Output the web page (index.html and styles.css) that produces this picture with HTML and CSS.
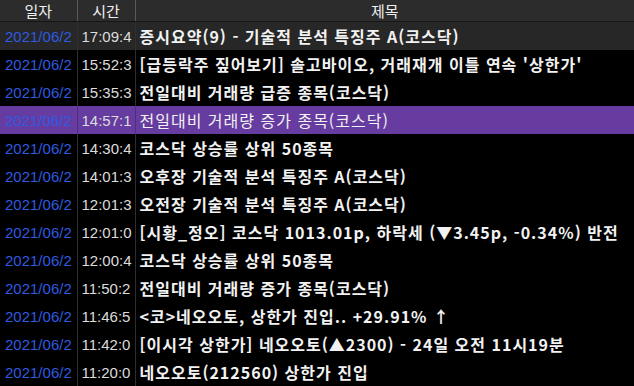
FILE: index.html
```html
<!DOCTYPE html>
<html lang="ko">
<head>
<meta charset="utf-8">
<title>뉴스</title>
<link rel="stylesheet" href="styles.css">
</head>
<body>
<table class="news">
  <colgroup>
    <col class="c-date">
    <col class="c-time">
    <col class="c-title">
  </colgroup>
  <thead>
    <tr><th>일자</th><th>시간</th><th>제목</th></tr>
  </thead>
  <tbody>
    <tr class="first"><td class="date">2021/06/2</td><td class="time">17:09:4</td><td class="title">증시요약(9) - 기술적 분석 특징주 A(코스닥)</td></tr>
    <tr><td class="date">2021/06/2</td><td class="time">15:52:3</td><td class="title">[급등락주 짚어보기] 솔고바이오, 거래재개 이틀 연속 '상한가'</td></tr>
    <tr><td class="date">2021/06/2</td><td class="time">15:35:3</td><td class="title">전일대비 거래량 급증 종목(코스닥)</td></tr>
    <tr class="selected"><td class="date">2021/06/2</td><td class="time">14:57:1</td><td class="title">전일대비 거래량 증가 종목(코스닥)</td></tr>
    <tr><td class="date">2021/06/2</td><td class="time">14:30:4</td><td class="title">코스닥 상승률 상위 50종목</td></tr>
    <tr><td class="date">2021/06/2</td><td class="time">14:01:3</td><td class="title">오후장 기술적 분석 특징주 A(코스닥)</td></tr>
    <tr><td class="date">2021/06/2</td><td class="time">12:01:3</td><td class="title">오전장 기술적 분석 특징주 A(코스닥)</td></tr>
    <tr><td class="date">2021/06/2</td><td class="time">12:01:0</td><td class="title">[시황_정오] 코스닥 1013.01p, 하락세 (▼3.45p, -0.34%) 반전</td></tr>
    <tr><td class="date">2021/06/2</td><td class="time">12:00:4</td><td class="title">코스닥 상승률 상위 50종목</td></tr>
    <tr><td class="date">2021/06/2</td><td class="time">11:50:2</td><td class="title">전일대비 거래량 증가 종목(코스닥)</td></tr>
    <tr><td class="date">2021/06/2</td><td class="time">11:46:5</td><td class="title">&lt;코&gt;네오오토, 상한가 진입.. +29.91% ↑</td></tr>
    <tr><td class="date">2021/06/2</td><td class="time">11:42:0</td><td class="title">[이시각 상한가] 네오오토(▲2300) - 24일 오전 11시19분</td></tr>
    <tr><td class="date">2021/06/2</td><td class="time">11:20:0</td><td class="title">네오오토(212560) 상한가 진입</td></tr>
  </tbody>
</table>
</body>
</html>
```
FILE: styles.css
```css
html, body {
  margin: 0;
  padding: 0;
  background: #000;
  overflow: hidden;
}

.news {
  width: 634px;
  border-collapse: collapse;
  table-layout: fixed;
  font-family: "Liberation Sans", Arial, sans-serif;
  font-size: 15px;
  color: #e6e6e6;
}

.c-date { width: 77px; }
.c-time { width: 58px; }

.news th {
  height: 21px;
  padding: 0;
  background: #2c2c2c;
  border-right: 1px solid #5a5a5a;
  border-bottom: 1px solid #161616;
  font-family: "Noto Sans CJK KR", sans-serif;
  font-weight: normal;
  font-size: 15px;
  color: #f0f0f0;
  text-align: center;
  vertical-align: middle;
  line-height: 20px;
}
.news th:last-child { border-right: none; }

.news td {
  height: 28px;
  padding: 0;
  white-space: nowrap;
  overflow: hidden;
  vertical-align: middle;
  border-right: 1px solid #2e2e2e;
}
.news td:last-child { border-right: none; }

.news tr.first td { background: #272727; }

.news tr.selected td {
  background: #673ca0;
  border-right-color: #4f2c80;
}

.date {
  color: #2f5ae0;
  padding-left: 5px !important;
}

.time {
  color: #dcdcdc;
  padding-left: 4px !important;
}

.title {
  padding-left: 4px !important;
  font-family: "Noto Sans CJK KR", sans-serif;
  font-weight: bold;
  font-size: 16px;
  letter-spacing: 1px;
  color: #f2f2f2;
}

.selected .title {
  font-weight: normal;
}
```
